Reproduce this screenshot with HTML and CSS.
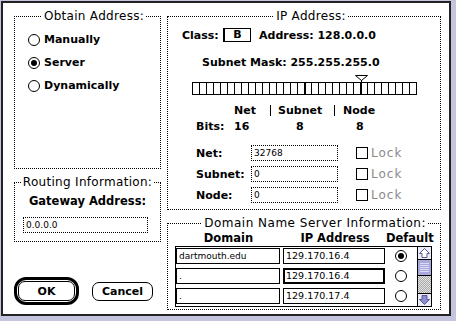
FILE: index.html
```html
<!DOCTYPE html>
<html lang="en">

<head>
    <meta charset="UTF-8">
    <title>MacTCP</title>
    <link rel="stylesheet" href="styles.css">
</head>

<body>
    <div class="dialog">
        <!-- left column -->
        <div class="col">
            <fieldset class="group obtain">
                <legend>Obtain Address:</legend>
                <div class="radio-row"><span class="radio"></span>Manually</div>
                <div class="radio-row"><span class="radio on"></span>Server</div>
                <div class="radio-row"><span class="radio"></span>Dynamically</div>
            </fieldset>

            <fieldset class="group routing">
                <legend>Routing Information:</legend>
                <div class="gw-label">Gateway Address:</div>
                <div class="field gw-field">0.0.0.0</div>
            </fieldset>

            <div class="buttons">
                <div class="btn-ring"><div class="btn ok">OK</div></div>
                <div class="btn cancel">Cancel</div>
            </div>
        </div>

        <!-- right column -->
        <div class="col">
            <fieldset class="group ip">
                <legend>IP Address:</legend>
                <div class="row class-row">
                    <span class="class-label">Class:</span>
                    <span class="class-box">B</span>
                    <span class="addr">Address: 128.0.0.0</span>
                </div>
                <div class="row mask-row">Subnet Mask: 255.255.255.0</div>

                <svg class="bitbar" width="227" height="20" viewBox="0 0 227 20">
                    <path d="M163.5 0.5 H175.5 L169.5 5.5 Z" fill="#fff" stroke="#000" />
                    <path d="M169.5 5 V7" stroke="#000" />
                    <rect x="0.5" y="7.5" width="224" height="12" fill="#fff" stroke="#000" />
                    <g stroke="#000">
                        <path d="M7.5 8V19M14.5 8V19M21.5 8V19M28.5 8V19M35.5 8V19M42.5 8V19M49.5 8V19M56.5 8V19M63.5 8V19M70.5 8V19M77.5 8V19M84.5 8V19M91.5 8V19M98.5 8V19M105.5 8V19" />
                        <path d="M119.5 8V19M126.5 8V19M133.5 8V19M140.5 8V19M147.5 8V19M154.5 8V19M161.5 8V19" />
                        <path d="M175.5 8V19M182.5 8V19M189.5 8V19M196.5 8V19M203.5 8V19M210.5 8V19M217.5 8V19" />
                    </g>
                    <rect x="112" y="8" width="2" height="11" fill="#000" />
                    <rect x="168" y="8" width="2" height="11" fill="#000" />
                </svg>

                <div class="row parts-row">
                    <span class="p-net">Net</span><span class="p-sep"></span><span class="p-subnet">Subnet</span><span class="p-sep"></span><span>Node</span>
                </div>
                <div class="row bits-row">
                    <span class="b-label">Bits:</span><span class="b-net">16</span><span class="b-sub">8</span><span>8</span>
                </div>

                <div class="field-rows">
                    <div class="row entry">
                        <span class="e-label">Net:</span>
                        <span class="field e-field">32768</span>
                        <span class="check"></span>
                        <span class="lock">Lock</span>
                    </div>
                    <div class="row entry">
                        <span class="e-label">Subnet:</span>
                        <span class="field e-field">0</span>
                        <span class="check"></span>
                        <span class="lock">Lock</span>
                    </div>
                    <div class="row entry">
                        <span class="e-label">Node:</span>
                        <span class="field e-field">0</span>
                        <span class="check"></span>
                        <span class="lock">Lock</span>
                    </div>
                </div>
            </fieldset>

            <fieldset class="group dns">
                <legend>Domain Name Server Information:</legend>
                <div class="dns-head">
                    <span>Domain</span>
                    <span></span>
                    <span>IP Address</span>
                    <span>Default</span>
                </div>
                <div class="dns-table">
                    <div class="dns-rows">
                        <div class="dns-row">
                            <span class="cell">dartmouth.edu</span>
                            <span class="cell ipcell">129.170.16.4</span>
                            <span class="radio on"></span>
                        </div>
                        <div class="dns-row">
                            <span class="cell">.</span>
                            <span class="cell ipcell focus">129.170.16.4</span>
                            <span class="radio"></span>
                        </div>
                        <div class="dns-row">
                            <span class="cell">.</span>
                            <span class="cell ipcell">129.170.17.4</span>
                            <span class="radio"></span>
                        </div>
                    </div>
                    <svg class="scroll" width="13" height="59" viewBox="0 0 13 59">
                        <defs>
                            <pattern id="dither" width="2" height="2" patternUnits="userSpaceOnUse">
                                <rect width="2" height="2" fill="#e4e4e4" />
                                <rect width="1" height="1" fill="#a8a8a8" />
                                <rect x="1" y="1" width="1" height="1" fill="#a8a8a8" />
                            </pattern>
                        </defs>
                        <rect x="0" y="0" width="13" height="12" fill="#ececf6" />
                        <path d="M6.5 1.5 L11.5 6.5 H9 V10.5 H4 V6.5 H1.5 Z" fill="#fff" stroke="#5a5a96" />
                        <path d="M0 12.5 H13" stroke="#000" />
                        <rect x="0" y="13" width="13" height="15" fill="#a9a9dc" />
                        <path d="M2 16.5 H11 M2 18.5 H11 M2 20.5 H11 M2 22.5 H11 M2 24.5 H11" stroke="#dcdcf4" />
                        <path d="M0 28.5 H13" stroke="#000" />
                        <rect x="0" y="29" width="13" height="17" fill="url(#dither)" />
                        <path d="M0 46.5 H13" stroke="#000" />
                        <rect x="0" y="47" width="13" height="12" fill="#ececf6" />
                        <path d="M6.5 57.5 L11.5 52.5 H9 V48.5 H4 V52.5 H1.5 Z" fill="#8c8cd0" stroke="#5a5a96" />
                    </svg>
                </div>
            </fieldset>
        </div>
    </div>
</body>

</html>
```

FILE: styles.css
```css
* {
    margin: 0;
    padding: 0;
    box-sizing: border-box;
}

body {
    background: #c4c4de;
    font-family: "DejaVu Sans", sans-serif;
    font-size: 11px;
    font-weight: bold;
    color: #000;
}

/* window */
.dialog {
    width: 450px;
    height: 315px;
    margin: 1px 0 0 1px;
    border: 2px solid #222;
    background: #fff;
    display: grid;
    grid-template-columns: 147px 274px;
    column-gap: 6px;
    align-items: start;
    padding: 6px 0 0 11px;
}

.col {
    display: flex;
    flex-direction: column;
}

/* group boxes */
.group {
    border: 1px dotted #000;
    min-width: 0;
}

.group legend {
    font-size: 12px;
    font-weight: normal;
    line-height: 14px;
    letter-spacing: 0.3px;
    padding: 0 2px;
    margin: 0 auto;
}

.obtain {
    height: 160px;
    padding: 5px 0 0 13px;
}

.radio-row {
    display: flex;
    align-items: center;
    gap: 4px;
    height: 23px;
}

.radio {
    width: 12px;
    height: 12px;
    border: 1px solid #000;
    border-radius: 50%;
    background: #fff;
    display: flex;
    align-items: center;
    justify-content: center;
}

.radio.on::after {
    content: "";
    width: 6px;
    height: 6px;
    border-radius: 50%;
    background: #000;
}

.routing {
    height: 67px;
    margin-top: 6px;
    padding: 0;
}

.gw-label {
    margin-top: 5px;
    line-height: 14px;
    text-align: center;
    font-size: 11.5px;
}

.field {
    border: 1px dotted #000;
    height: 16px;
    font-size: 9px;
    font-weight: normal;
    line-height: 14px;
    padding-left: 2px;
    background: #fff;
}

.gw-field {
    width: 125px;
    margin: 9px 0 0 8px;
}

/* buttons */
.buttons {
    display: flex;
    align-items: center;
    margin-top: 35px;
}

.btn-ring {
    border: 3px solid #000;
    border-radius: 12px;
    padding: 1px;
}

.btn {
    border: 1px solid #000;
    border-radius: 7px;
    height: 20px;
    display: flex;
    align-items: center;
    justify-content: center;
    background: #fff;
}

.ok {
    width: 57px;
}

.cancel {
    width: 61px;
    height: 19px;
    margin-left: 13px;
}

/* IP address */
.ip {
    height: 201px;
    padding: 5px 0 0 14px;
}

.row {
    display: flex;
    align-items: center;
    height: 14px;
}

.class-label {
    width: 41px;
}

.class-box {
    width: 28px;
    height: 14px;
    border: 1px solid #000;
    border-left-width: 2px;
    text-align: center;
    line-height: 12px;
}

.addr {
    margin-left: 8px;
}

.mask-row {
    margin-top: 13px;
    padding-left: 20px;
}

.bitbar {
    display: block;
    margin: 6px 0 0 10px;
}

.parts-row {
    margin-top: 8px;
    padding-left: 52px;
}

.p-net {
    width: 36px;
}

.p-sep {
    width: 1px;
    height: 11px;
    background: #000;
    margin-right: 7px;
}

.p-subnet {
    width: 56px;
}

.p-subnet + .p-sep {
    margin-right: 8px;
}

.bits-row {
    margin-top: 2px;
    padding-left: 14px;
}

.b-label {
    width: 38px;
}

.b-net {
    width: 62px;
}

.b-sub {
    width: 60px;
}

.field-rows {
    display: flex;
    flex-direction: column;
    gap: 5px;
    margin-top: 12px;
    padding-left: 14px;
}

.entry {
    height: 16px;
}

.e-label {
    width: 55px;
}

.e-field {
    width: 87px;
}

.check {
    width: 12px;
    height: 12px;
    border: 1px solid #000;
    margin-left: 18px;
}

.lock {
    margin-left: 3px;
    font-size: 12px;
    font-weight: normal;
    letter-spacing: 1px;
    color: #8a8a8a;
}

/* DNS */
.dns {
    height: 94px;
    margin-top: 6px;
    padding: 1px 0 0 7px;
}

.dns legend {
    letter-spacing: 0.5px;
    margin: 0 12px 0 auto;
}

.dns-head {
    display: grid;
    grid-template-columns: 105px 3px 102px 32px;
    height: 14px;
    line-height: 14px;
    padding-left: 1px;
    font-size: 11.5px;
    text-align: center;
}

.dns-table {
    display: flex;
    width: 257px;
    height: 61px;
    margin-top: 1px;
    border: 1px solid #000;
}

.dns-rows {
    flex: 1;
    display: flex;
    flex-direction: column;
    gap: 4px;
    padding-top: 1px;
}

.dns-row {
    display: grid;
    grid-template-columns: 104px 102px 1fr;
    column-gap: 3px;
    align-items: center;
    height: 16px;
}

.cell {
    border: 1px solid #000;
    height: 16px;
    font-size: 9px;
    font-weight: normal;
    line-height: 14px;
    padding-left: 2px;
}

.ipcell {
    font-size: 9.5px;
}

.cell.focus {
    border-width: 2px;
    line-height: 12px;
    padding-left: 1px;
}

.dns-row .radio {
    justify-self: center;
    margin-right: 4px;
}

.scroll {
    display: block;
    border-left: 1px solid #000;
    width: 14px;
}
```
